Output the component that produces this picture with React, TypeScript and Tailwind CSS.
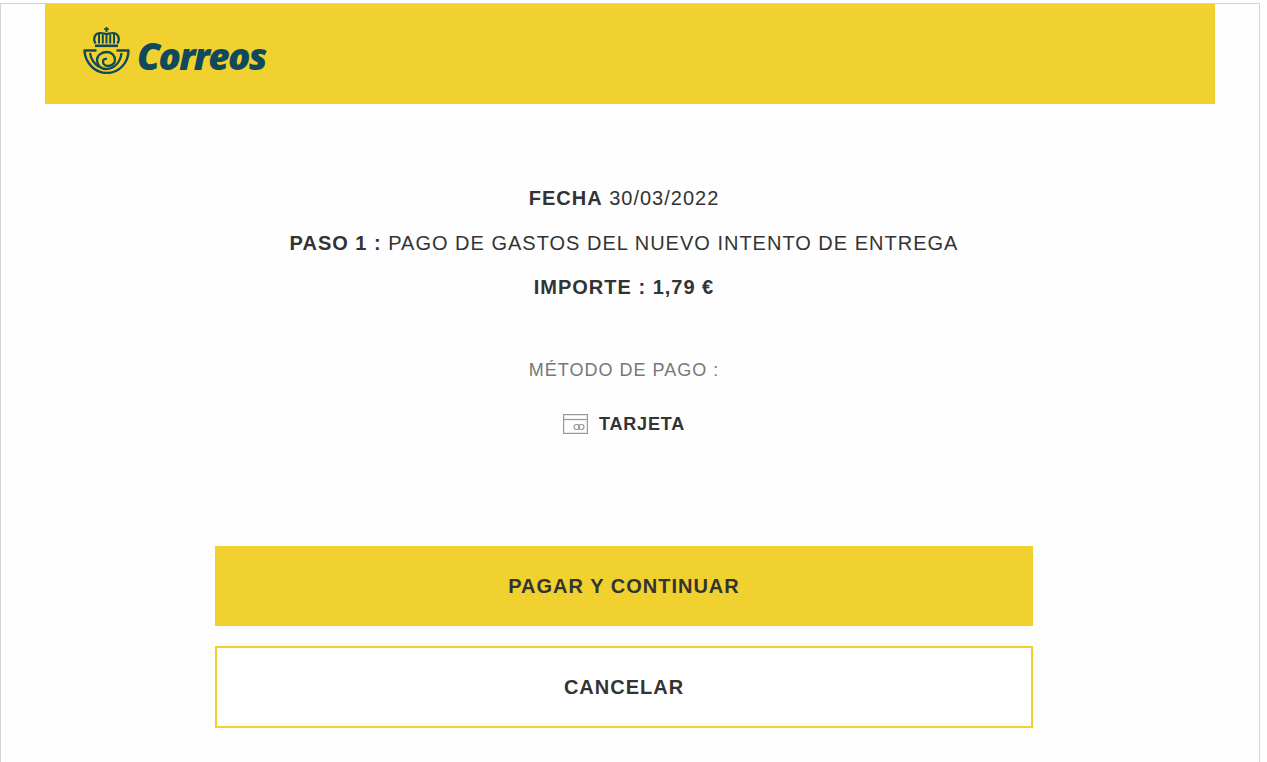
const CorreosEmblem = () => (
  <svg width="47" height="47" viewBox="0 0 47 47" fill="none" stroke="#0f4a5c" className="shrink-0">
    {/* crown */}
    <path d="M23.500 0v5M21.200 2.200h4.600" strokeWidth="1.800" />
    <path d="M12.500 16.500c-3-5.500-.5-10.500 4.500-10.500 3 0 5 1 6.500 1S27 6 30 6c5 0 7.500 5 4.500 10.500" strokeWidth="2.200" />
    <path d="M16 7v9.500M19.800 7.500v9M23.500 7.500v9M27.200 7.500v9M31 7v9.500" strokeWidth="2" />
    <path d="M12 18.800h23" strokeWidth="2.600" />
    {/* horn */}
    <path d="M1.500 24.200C2.500 36 12 46 24 46c12 0 21-10 21.500-21.800" strokeWidth="2.400" />
    <path d="M0.500 23.500h13M33.500 23.500h13" strokeWidth="2.400" />
    <path d="M7 26c1 6.500 4.500 11 9 14" strokeWidth="2.200" />
    <path d="M38.500 26c-1 10-8 16-15.500 16-5.500 0-9-4-9-9 0-5 5-8 10-8s8 4 8 8c0 4-4 6-7 6s-5-2-5-4.500c0-2 2-3 4-2.500" strokeWidth="2.300" />
  </svg>
);

const CardIcon = () => (
  <svg width="25" height="20" viewBox="0 0 25 20" fill="none" stroke="#999999" strokeWidth="1.200">
    <rect x="0.600" y="0.600" width="23.800" height="18.800" />
    <path d="M1 5.500h23" />
    <rect x="11" y="10.500" width="5.500" height="5" rx="2.400" />
    <rect x="15.500" y="10.500" width="5.500" height="5" rx="2.400" />
  </svg>
);

const App = () => {
  return (
    <div className="h-[762px] overflow-hidden bg-[#fefefe] pt-[3px] font-['Liberation_Sans',Arial,sans-serif] text-[#333333]">
      <div className="mr-[7px] h-[800px] border-x border-t border-[#d4d4d4] bg-[#fefefe] px-[44px]">
        <header className="flex h-[100px] items-center bg-[#f1d130] pl-[38px]">
          <div className="flex items-center gap-[7px]">
            <div className="mt-[-8px]">
              <CorreosEmblem />
            </div>
            <span className="pt-[3px] font-['Open_Sans',sans-serif] text-[37px] leading-none font-extrabold tracking-[-1.700px] text-[#0f4a5c] italic">
              Correos
            </span>
          </div>
        </header>

        <div className="flex flex-col items-center pt-[81px] pr-[12px] text-[20px] leading-[26px] tracking-[1px]">
          <p className="mb-[19px]">
            <b>FECHA</b> 30/03/2022
          </p>
          <p className="mb-[18px]">
            <b>PASO 1 :</b> PAGO DE GASTOS DEL NUEVO INTENTO DE ENTREGA
          </p>
          <p className="font-bold">IMPORTE : 1,79 €</p>

          <p className="mt-[57px] text-[18px] text-[#777777]">MÉTODO DE PAGO :</p>

          <div className="mt-[28px] flex items-center gap-[11px]">
            <CardIcon />
            <span className="text-[18px] font-bold tracking-[0.800px]">TARJETA</span>
          </div>

          <button className="mt-[109px] h-[80px] w-[818px] bg-[#f1d130] font-bold">
            PAGAR Y CONTINUAR
          </button>
          <button className="mt-[20px] h-[82px] w-[818px] border-2 border-[#f1d130] bg-white font-bold">
            CANCELAR
          </button>
        </div>
      </div>
    </div>
  );
};

export default App;
